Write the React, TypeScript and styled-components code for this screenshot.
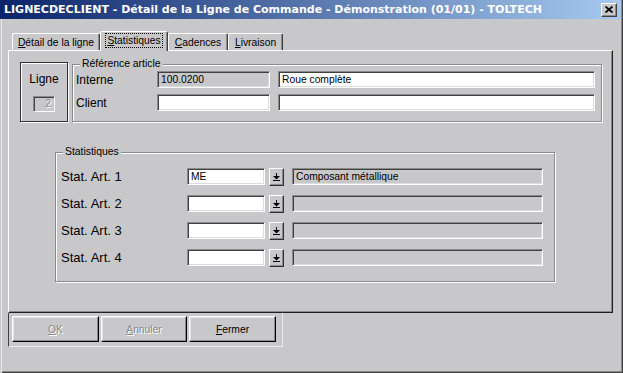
import React from 'react';
import styled, { createGlobalStyle } from 'styled-components';

const FACE = '#c8c7ca';

const GlobalStyle = createGlobalStyle`
  html, body {
    margin: 0;
    padding: 0;
    background: ${FACE};
  }
  body {
    font-family: "Liberation Sans", Arial, sans-serif;
  }
`;

function ArrowGlyph() {
  return (
    <svg width="7" height="8" viewBox="0 0 7 8">
      <rect x="3" y="0" width="1" height="3" fill="#000" />
      <path d="M0 3h7L3.5 6.5z" fill="#000" />
      <rect x="0" y="7" width="7" height="1" fill="#000" />
    </svg>
  );
}

function CloseGlyph() {
  return (
    <svg width="8" height="7" viewBox="0 0 8 7">
      <path d="M0.5 0.5L7.5 6.5M7.5 0.5L0.5 6.5" stroke="#000" strokeWidth="1.8" />
    </svg>
  );
}

const statRows = [
  { label: 'Stat. Art. 1', code: 'ME', text: 'Composant métallique' },
  { label: 'Stat. Art. 2', code: '', text: '' },
  { label: 'Stat. Art. 3', code: '', text: '' },
  { label: 'Stat. Art. 4', code: '', text: '' },
];

const tabs = [
  { key: 'D', rest: 'étail de la ligne', w: 88 },
  { key: 'S', rest: 'tatistiques', w: 68, active: true },
  { key: 'C', rest: 'adences', w: 60 },
  { key: 'L', rest: 'ivraison', w: 55 },
];

export default function App() {
  return (
    <>
      <GlobalStyle />
      <Window>
        <TitleBar>
          <TitleText>
            LIGNECDECLIENT - Détail de la Ligne de Commande - Démonstration (01/01) - TOLTECH
          </TitleText>
          <CloseButton>
            <CloseGlyph />
          </CloseButton>
        </TitleBar>

        <Body>
          <TabStrip>
            {tabs.map(t => (
              <Tab key={t.key} $w={t.w} $active={!!t.active}>
                <TabLabel $active={!!t.active}>
                  <u>{t.key}</u>
                  {t.rest}
                </TabLabel>
              </Tab>
            ))}
          </TabStrip>

          <Panel>
            <TopRow>
              <LigneBox>
                <BigLabel>Ligne</BigLabel>
                <LigneField>2</LigneField>
              </LigneBox>

              <RefGroup>
                <Legend>Référence article</Legend>
                <RefGrid>
                  <BigLabel>Interne</BigLabel>
                  <Field $disabled>100.0200</Field>
                  <Field>Roue complète</Field>
                  <BigLabel>Client</BigLabel>
                  <Field />
                  <Field />
                </RefGrid>
              </RefGroup>
            </TopRow>

            <StatGroup>
              <Legend>Statistiques</Legend>
              <StatList>
                {statRows.map(r => (
                  <StatRow key={r.label}>
                    <StatLabel>{r.label}</StatLabel>
                    <CodeField>{r.code}</CodeField>
                    <DropButton>
                      <ArrowGlyph />
                    </DropButton>
                    <DescField $disabled>{r.text}</DescField>
                  </StatRow>
                ))}
              </StatList>
            </StatGroup>
          </Panel>

          <ButtonFrame>
            <PushButton $w={87} disabled>
              <u>O</u>K
            </PushButton>
            <PushButton $w={86} disabled>
              <u>A</u>nnuler
            </PushButton>
            <PushButton $w={87}>
              <u>F</u>ermer
            </PushButton>
          </ButtonFrame>
        </Body>
      </Window>
    </>
  );
}

const Window = styled.div`
  width: 623px;
  height: 373px;
  box-sizing: border-box;
  background: ${FACE};
  display: flex;
  flex-direction: column;
  padding: 0 2px 2px 0;
  box-shadow: inset 1px 0 0 ${FACE}, inset 2px 0 0 #ecebee, inset -1px -1px 0 #404040,
    inset -2px -2px 0 #8a898c;
`;

const TitleBar = styled.div`
  height: 19px;
  display: flex;
  align-items: center;
  justify-content: space-between;
  padding: 0 4px 0 4px;
  background: linear-gradient(to right, #0a246a, #a6caf0);
`;

const TitleText = styled.div`
  color: #fff;
  font-family: "DejaVu Sans", Verdana, sans-serif;
  font-weight: bold;
  font-size: 11px;
  white-space: nowrap;
`;

const CloseButton = styled.div`
  width: 16px;
  height: 14px;
  box-sizing: border-box;
  background: ${FACE};
  display: flex;
  align-items: center;
  justify-content: center;
  border: 1px solid;
  border-color: #fff #404040 #404040 #fff;
  box-shadow: inset -1px -1px 0 #8a898c;
`;

const Body = styled.div`
  flex: 1;
  display: flex;
  flex-direction: column;
  padding: 12px 8px 0 8px;
`;

const TabStrip = styled.div`
  display: flex;
  align-items: flex-end;
  height: 19px;
  padding-left: 4px;
`;

const Tab = styled.div<{ $w: number; $active: boolean }>`
  width: ${p => p.$w}px;
  height: ${p => (p.$active ? 20 : 17)}px;
  box-sizing: border-box;
  position: relative;
  z-index: ${p => (p.$active ? 2 : 0)};
  margin-bottom: ${p => (p.$active ? -1 : 0)}px;
  background: ${FACE};
  border-top: 1px solid #fff;
  border-left: 1px solid #fff;
  border-right: 1px solid #404040;
  border-radius: 2px 2px 0 0;
  box-shadow: inset -1px 0 0 #8a898c;
  display: flex;
  align-items: center;
  justify-content: center;
  padding-bottom: ${p => (p.$active ? 2 : 0)}px;
  font-size: 10.3px;
  color: #000;
`;

const TabLabel = styled.span<{ $active: boolean }>`
  padding: 0 1px;
  outline: ${p => (p.$active ? '1px dotted #000' : 'none')};
  line-height: 13px;
  white-space: nowrap;
`;

const Panel = styled.div`
  height: 263px;
  width: 605px;
  box-sizing: border-box;
  border-top: 1px solid #fff;
  border-left: 1px solid #fff;
  border-right: 1px solid #202020;
  border-bottom: 1px solid #202020;
  box-shadow: inset -1px -1px 0 #8a898c;
  display: flex;
  flex-direction: column;
`;

const TopRow = styled.div`
  display: flex;
  align-items: flex-start;
`;

const BigLabel = styled.div`
  font-size: 12px;
  color: #000;
  white-space: nowrap;
`;

const LigneBox = styled.div`
  margin: 11px 0 0 11px;
  width: 48px;
  height: 60px;
  box-sizing: border-box;
  border: 1px solid #303030;
  box-shadow: inset 1px 1px 0 #fff, 1px 1px 0 #fff;
  display: flex;
  flex-direction: column;
  align-items: center;
  padding-top: 9px;
  gap: 10px;
`;

const LigneField = styled.div`
  width: 22px;
  height: 16px;
  box-sizing: border-box;
  border: 1px solid;
  border-color: #8a898c #fff #fff #8a898c;
  box-shadow: inset 1px 1px 0 #404040;
  font-size: 10.3px;
  color: #8a898c;
  text-shadow: 1px 1px 0 #fff;
  text-align: right;
  padding-right: 3px;
  line-height: 14px;
`;

const GroupBox = styled.div`
  position: relative;
  box-sizing: border-box;
  border: 1px solid #8a898c;
  box-shadow: inset 1px 1px 0 #fff, 1px 1px 0 #fff;
`;

const Legend = styled.div`
  position: absolute;
  top: -7px;
  left: 7px;
  padding: 0 2px;
  background: ${FACE};
  font-size: 10.4px;
  line-height: 12px;
  color: #000;
`;

const RefGroup = styled(GroupBox)`
  margin: 13px 0 0 4px;
  width: 530px;
  height: 58px;
`;

const RefGrid = styled.div`
  display: grid;
  grid-template-columns: 73px 113px 317px;
  column-gap: 8px;
  row-gap: 6px;
  align-items: center;
  padding: 6px 0 0 3px;
`;

const Field = styled.div<{ $disabled?: boolean }>`
  height: 17px;
  box-sizing: border-box;
  background: ${p => (p.$disabled ? FACE : '#fff')};
  border: 1px solid;
  border-color: #8a898c #fff #fff #8a898c;
  box-shadow: inset 1px 1px 0 #404040, inset -1px -1px 0 #dcdbde;
  font-size: 10.3px;
  line-height: 15px;
  padding: 0 3px;
  color: #000;
  white-space: nowrap;
  overflow: hidden;
`;

const StatGroup = styled(GroupBox)`
  margin: 30px 0 0 46px;
  width: 500px;
  height: 130px;
`;

const StatList = styled.div`
  display: flex;
  flex-direction: column;
  gap: 10px;
  padding: 15px 0 0 5px;
`;

const StatRow = styled.div`
  display: flex;
  align-items: center;
  height: 17px;
`;

const StatLabel = styled.div`
  width: 126px;
  font-size: 13px;
  color: #000;
  white-space: nowrap;
`;

const CodeField = styled(Field)`
  width: 78px;
`;

const DescField = styled(Field)`
  width: 251px;
  margin-left: 8px;
`;

const DropButton = styled.div`
  width: 15px;
  height: 18px;
  margin-left: 4px;
  box-sizing: border-box;
  background: ${FACE};
  border: 1px solid;
  border-color: #fff #303030 #303030 #fff;
  box-shadow: inset -1px -1px 0 #8a898c;
  display: flex;
  align-items: center;
  justify-content: center;
`;

const ButtonFrame = styled.div`
  width: 275px;
  height: 34px;
  box-sizing: border-box;
  border-left: 1px solid #404040;
  border-right: 1px solid #ecebee;
  border-bottom: 1px solid #ecebee;
  display: flex;
  align-items: flex-start;
  gap: 2px;
  padding: 3px 0 0 3px;
`;

const PushButton = styled.button<{ $w: number }>`
  width: ${p => p.$w}px;
  height: 26px;
  box-sizing: border-box;
  margin: 0;
  padding: 0;
  background: ${FACE};
  border: 1px solid;
  border-color: #fff #000 #000 #fff;
  box-shadow: inset -1px -1px 0 #8a898c, inset 1px 1px 0 #e4e3e6;
  font-family: "Liberation Sans", Arial, sans-serif;
  font-size: 10.3px;
  color: #000;

  &:disabled {
    color: #8a898c;
    text-shadow: 1px 1px 0 #fff;
  }
`;
